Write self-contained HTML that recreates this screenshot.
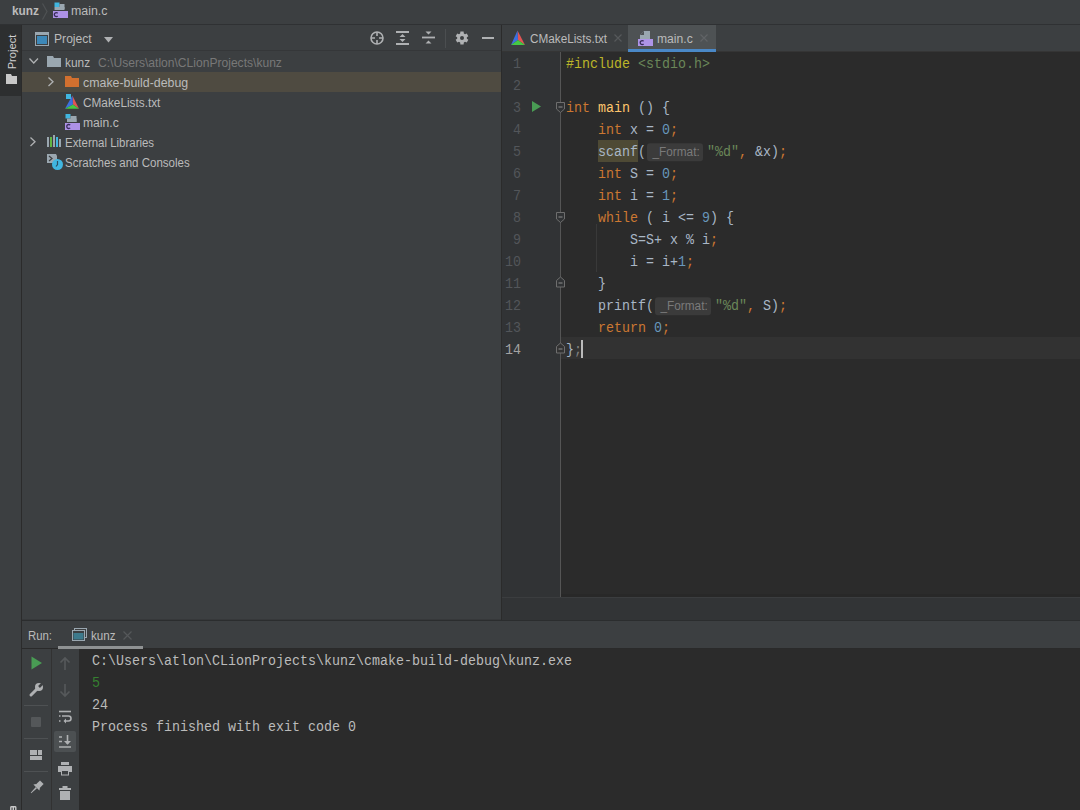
<!DOCTYPE html>
<html><head><meta charset="utf-8">
<style>
*{margin:0;padding:0;box-sizing:border-box}
html,body{width:1080px;height:810px;overflow:hidden;background:#3c3f41;font-family:"Liberation Sans",sans-serif;color:#bbbbbb}
div,span.a,svg{position:absolute}
svg{overflow:visible}
.t{font-size:12.5px;line-height:14px;white-space:nowrap;transform-origin:0 11.33px}
.m{font-family:"Liberation Mono",monospace;font-size:13.33px;line-height:22px;white-space:pre;height:22px;transform:scaleY(1.06);transform-origin:0 14.55px}
.kw{color:#cc7832}.num{color:#6897bb}.str{color:#6a8759}.pp{color:#bbb529}.fn{color:#ffc66d}.tx{color:#a9b7c6}
.ln{font-family:"Liberation Mono",monospace;font-size:13.33px;line-height:22px;color:#53565a;text-align:right;width:28px;left:0;transform:scaleY(1.05);transform-origin:0 14.55px}
.hint{display:inline-block;position:relative;width:61px;height:22px;vertical-align:top}
.hint i{position:absolute;left:1px;top:2px;width:56px;height:17px;background:#3b3b3b;border-radius:3px;font-style:normal;font-family:"Liberation Sans",sans-serif;font-size:11.8px;line-height:17px;color:#7a7a7a;padding-left:5.5px;overflow:hidden}
</style></head><body>

<!-- NAV BAR -->
<div style="left:0;top:0;width:1080px;height:24px;background:#3c3f41"></div>
<div style="left:0;top:24px;width:1080px;height:1px;background:#2f3133"></div>
<div class="t" style="left:12.3px;top:3.7px;font-weight:bold;color:#bbbbbb;transform:scaleX(0.95)">kunz</div>
<svg style="left:42px;top:3px" width="6" height="17"><path d="M0.5 0.5 L5 8.5 L0.5 16.5" stroke="#4f5254" stroke-width="1.2" fill="none"/></svg>
<svg style="left:53px;top:2px" width="16" height="16">
  <rect x="1.5" y="0.5" width="5" height="4.5" fill="#40b6e0"/>
  <rect x="6.5" y="2" width="5" height="5" fill="#9aa7b0"/>
  <rect x="1.5" y="5" width="10" height="3" fill="#9aa7b0"/>
  <rect x="0" y="9" width="15" height="7" fill="#b99bf8" opacity="0.9"/>
  <path d="M4.7 11.2 A2 2 0 1 0 4.7 14.0" stroke="#3a2d5c" stroke-width="1.3" fill="none"/>
</svg>
<div class="t" style="left:71px;top:3.7px;color:#bbbbbb;transform:scaleX(0.99)">main.c</div>

<!-- LEFT STRIPE -->
<div style="left:0;top:25px;width:21px;height:785px;background:#3c3f41"></div>
<div style="left:0;top:25px;width:21px;height:71px;background:#2d2f30"></div>
<div style="left:21px;top:25px;width:1px;height:785px;background:#2b2b2b"></div>
<div class="t" style="left:-8px;top:45px;width:40px;height:14px;transform:rotate(-90deg) scaleX(0.965);transform-origin:20px 7px;color:#d0d0d0;font-size:11.5px;text-align:center">Project</div>
<svg style="left:6px;top:74px" width="12" height="11"><path d="M0 0 H5 L6 2 H11 V10 H0 Z" fill="#c8c8c8"/></svg>

<svg style="left:10px;top:806px" width="7" height="4"><path d="M0.8 4 V1.5 Q0.8 0.8 1.5 0.8 H5 Q5.8 0.8 5.8 1.5 V4 M3.3 1 V4" stroke="#c8c8c8" stroke-width="1.4" fill="none"/></svg>
<!-- PROJECT PANEL -->
<div style="left:22px;top:25px;width:479px;height:595px;background:#3c3f41"></div>
<div style="left:22px;top:50px;width:479px;height:1px;background:#353739"></div>
<svg style="left:35px;top:32px" width="14" height="14"><rect x="0.5" y="0.5" width="13" height="13" fill="none" stroke="#9aa7b0"/><rect x="1" y="1" width="12" height="2" fill="#9aa7b0"/><rect x="2" y="4" width="10" height="8" fill="#3d88b8"/></svg>
<div class="t" style="left:53.5px;top:31.7px;color:#bbbbbb;transform:scaleX(0.97)">Project</div>
<svg style="left:103.5px;top:37px" width="10" height="6"><path d="M0 0 H9 L4.5 5.5 Z" fill="#afb1b3"/></svg>
<!-- header icons -->
<svg style="left:369px;top:31px" width="16" height="16"><circle cx="8" cy="7" r="6" fill="none" stroke="#afb1b3" stroke-width="1.6"/><path d="M8 1 V5 M8 9 V13 M2 7 H6 M10 7 H14" stroke="#afb1b3" stroke-width="1.6"/></svg>
<svg style="left:396px;top:30px" width="14" height="16"><path d="M0 2 H13 M0 14 H13" stroke="#afb1b3" stroke-width="1.8"/><path d="M3.5 7 L6.5 4 L9.5 7 Z M3.5 9 L6.5 12 L9.5 9 Z" fill="#afb1b3"/></svg>
<svg style="left:422px;top:31px" width="14" height="14"><path d="M0 6.5 H13" stroke="#afb1b3" stroke-width="1.8"/><path d="M3.5 0.5 L6.5 3.5 L9.5 0.5 Z M3.5 12.5 L6.5 9.5 L9.5 12.5 Z" fill="#afb1b3"/></svg>
<div style="left:445px;top:29px;width:1px;height:19px;background:#4b4e50"></div>
<svg style="left:455px;top:31px" width="14" height="14"><g transform="translate(7,7) rotate(90)"><path d="M4.54 -1.84 L6.40 -1.60 L6.40 1.60 L4.54 1.84 L3.86 3.02 L4.58 4.75 L1.82 6.34 L0.68 4.85 L-0.68 4.85 L-1.82 6.34 L-4.58 4.75 L-3.86 3.02 L-4.54 1.84 L-6.40 1.60 L-6.40 -1.60 L-4.54 -1.84 L-3.86 -3.02 L-4.58 -4.75 L-1.82 -6.34 L-0.68 -4.85 L0.68 -4.85 L1.82 -6.34 L4.58 -4.75 L3.86 -3.02 Z" fill="#afb1b3"/><circle r="2" fill="#3c3f41"/></g></svg>
<div style="left:482px;top:37px;width:12px;height:2px;background:#afb1b3"></div>

<!-- tree -->
<div style="left:22px;top:72px;width:479px;height:20px;background:#4f4b41"></div>
<svg style="left:29px;top:58px" width="10" height="7"><path d="M0.5 0.5 L4.75 5 L9 0.5" stroke="#afb1b3" stroke-width="1.3" fill="none"/></svg>
<svg style="left:47px;top:56px" width="15" height="12"><path d="M0 0 H6 L7 2 H14 V11 H0 Z" fill="#9aa7b0"/></svg>
<div class="t" style="left:64.6px;top:56px;color:#bbbbbb;transform:scaleX(0.95)">kunz</div>
<div class="t" style="left:97.7px;top:56px;color:#787878;transform:scaleX(0.966)">C:\Users\atlon\CLionProjects\kunz</div>

<svg style="left:48px;top:77px" width="6" height="10"><path d="M0.5 0.5 L5 4.75 L0.5 9" stroke="#afb1b3" stroke-width="1.3" fill="none"/></svg>
<svg style="left:65px;top:76px" width="15" height="12"><path d="M0 0 H6 L7 2 H14 V11 H0 Z" fill="#d2702f"/></svg>
<div class="t" style="left:83.3px;top:76px;color:#bbbbbb;transform:scaleX(0.99)">cmake-build-debug</div>

<svg style="left:64px;top:93px" width="16" height="17">
  <path d="M8.4 2.5 L15 15.7 L9 11.5 Z" fill="#e05555"/>
  <path d="M8.4 2.5 L1 15.7 L9 11.5 Z" fill="#3d6fe0"/>
  <path d="M1 15.7 L15 15.7 L9 11.5 Z" fill="#45c845"/>
  <rect x="2" y="1" width="5" height="5" fill="#40b6e0"/>
</svg>
<div class="t" style="left:82.6px;top:96px;color:#bbbbbb;transform:scaleX(0.944)">CMakeLists.txt</div>

<svg style="left:65px;top:114px" width="16" height="16">
  <rect x="0.5" y="0" width="5" height="4.5" fill="#40b6e0"/>
  <rect x="5.5" y="2" width="6" height="6" fill="#9aa7b0"/>
  <rect x="2" y="4.5" width="9.5" height="3.5" fill="#9aa7b0"/>
  <rect x="0" y="9" width="15" height="7" fill="#b99bf8" opacity="0.9"/>
  <path d="M5.2 11.1 A2 2 0 1 0 5.2 13.9" stroke="#3a2d5c" stroke-width="1.3" fill="none"/>
</svg>
<div class="t" style="left:83px;top:116px;color:#bbbbbb;transform:scaleX(0.97)">main.c</div>

<svg style="left:30px;top:137px" width="6" height="10"><path d="M0.5 0.5 L5 4.75 L0.5 9" stroke="#afb1b3" stroke-width="1.3" fill="none"/></svg>
<svg style="left:46px;top:135px" width="16" height="12">
  <rect x="1" y="2" width="2" height="10" fill="#9aa7b0"/>
  <rect x="4" y="2" width="2" height="10" fill="#62b543"/>
  <rect x="7" y="0" width="2" height="12" fill="#9aa7b0"/>
  <rect x="10" y="2" width="2" height="10" fill="#40b6e0"/>
  <rect x="13" y="4" width="2" height="8" fill="#9aa7b0"/>
</svg>
<div class="t" style="left:64.8px;top:136px;color:#bbbbbb;transform:scaleX(0.916)">External Libraries</div>

<svg style="left:47px;top:154px" width="16" height="16">
  <path d="M0 0 H9 L10 2 V9 H0 Z" fill="#9aa7b0"/>
  <path d="M2 2 L5 4.5 L2 7" stroke="#3c3f41" stroke-width="1.2" fill="none"/>
  <circle cx="10.5" cy="10.5" r="5.5" fill="#40b6e0"/>
  <path d="M10.5 7 V10.5 L9 12.5" stroke="#2b4f63" stroke-width="1.2" fill="none"/>
</svg>
<div class="t" style="left:64.6px;top:156px;color:#bbbbbb;transform:scaleX(0.92)">Scratches and Consoles</div>

<!-- vertical separator -->
<div style="left:501px;top:25px;width:1px;height:596px;background:#2b2b2b"></div>

<!-- EDITOR TABS -->
<div style="left:502px;top:25px;width:578px;height:26px;background:#3c3f41"></div>
<div style="left:628px;top:25px;width:88px;height:24px;background:#4e5254"></div>
<div style="left:628px;top:49px;width:88px;height:3px;background:#4a88c7"></div>
<div style="left:502px;top:51px;width:126px;height:1px;background:#353535"></div><div style="left:716px;top:51px;width:364px;height:1px;background:#353535"></div>
<svg style="left:510px;top:30px" width="16" height="16">
  <path d="M7.5 0.5 L15 15 L8 10 Z" fill="#e05555"/>
  <path d="M7.5 0.5 L1 15 L8 10 Z" fill="#3d6fe0"/>
  <path d="M1 15 L15 15 L8 10 Z" fill="#45c845"/>
</svg>
<div class="t" style="left:529.8px;top:32.4px;color:#bbbbbb;transform:scaleX(0.94)">CMakeLists.txt</div>
<svg style="left:614px;top:34px" width="8" height="8"><path d="M0.5 0.5 L7.5 7.5 M7.5 0.5 L0.5 7.5" stroke="#56595b" stroke-width="1.2"/></svg>
<svg style="left:638px;top:31px" width="16" height="16">
  <path d="M6 0 H12 V8 H2 V4 Z" fill="#9aa7b0"/>
  <path d="M2 4 H6 V0 Z" fill="#4e5254"/>
  <rect x="0" y="8" width="15" height="7" fill="#b99bf8" opacity="0.9"/>
  <path d="M5.6 10.2 A2 2 0 1 0 5.6 13.0" stroke="#3a2d5c" stroke-width="1.3" fill="none"/>
</svg>
<div class="t" style="left:656.5px;top:32.4px;color:#bbbbbb;transform:scaleX(0.97)">main.c</div>
<svg style="left:700px;top:34px" width="8" height="8"><path d="M0.5 0.5 L7.5 7.5 M7.5 0.5 L0.5 7.5" stroke="#606366" stroke-width="1.2"/></svg>

<!-- EDITOR -->
<div style="left:502px;top:52px;width:578px;height:545px;background:#2b2b2b"></div>
<div style="left:502px;top:52px;width:58px;height:545px;background:#313335"></div>
<div style="left:561px;top:337px;width:519px;height:22px;background:#323232"></div>
<div style="left:560px;top:52px;width:1px;height:545px;background:#555555"></div>
<div style="left:561px;top:594px;width:519px;height:3px;background:#282828"></div><div style="left:502px;top:597px;width:578px;height:1px;background:#3b3d3f"></div>
<div style="left:502px;top:598px;width:578px;height:22px;background:#323436"></div>

<!-- line numbers -->
<div id="lns" style="left:493px;top:54.45px;width:28px;height:330px">
<div class="ln" style="top:0">1</div>
<div class="ln" style="top:22px">2</div>
<div class="ln" style="top:44px">3</div>
<div class="ln" style="top:66px">4</div>
<div class="ln" style="top:88px">5</div>
<div class="ln" style="top:110px">6</div>
<div class="ln" style="top:132px">7</div>
<div class="ln" style="top:154px">8</div>
<div class="ln" style="top:176px">9</div>
<div class="ln" style="top:198px">10</div>
<div class="ln" style="top:220px">11</div>
<div class="ln" style="top:242px">12</div>
<div class="ln" style="top:264px">13</div>
<div class="ln" style="top:286px;color:#a4a3a3">14</div>
</div>
<!-- run gutter icon -->
<svg style="left:532px;top:101px" width="10" height="11"><path d="M0 0 L9 5.5 L0 11 Z" fill="#499c54"/></svg>
<!-- fold markers -->
<svg style="left:556px;top:102px" width="10" height="12"><path d="M0.5 0.5 H8.5 V7 L4.5 10.5 L0.5 7 Z" fill="#313335" stroke="#6e6e6e"/><path d="M2.5 5 H6.5" stroke="#8e8e8e"/></svg>
<svg style="left:556px;top:212px" width="10" height="12"><path d="M0.5 0.5 H8.5 V7 L4.5 10.5 L0.5 7 Z" fill="#313335" stroke="#6e6e6e"/><path d="M2.5 5 H6.5" stroke="#8e8e8e"/></svg>
<svg style="left:556px;top:276px" width="10" height="12"><path d="M0.5 11 H8.5 V4.5 L4.5 1 L0.5 4.5 Z" fill="#313335" stroke="#6e6e6e"/><path d="M2.5 7 H6.5" stroke="#8e8e8e"/></svg>
<svg style="left:556px;top:342px" width="10" height="12"><path d="M0.5 11 H8.5 V4.5 L4.5 1 L0.5 4.5 Z" fill="#323232" stroke="#6e6e6e"/><path d="M2.5 7 H6.5" stroke="#8e8e8e"/></svg>
<!-- indent guide -->
<div style="left:596px;top:224px;width:1px;height:48px;background:#393939"></div>
<!-- scanf highlight -->
<div style="left:598px;top:140px;width:40px;height:22px;background:#4e4a35"></div>

<!-- code -->
<div id="code" style="left:566px;top:54.45px;width:514px;height:330px" class="tx">
<div class="m" style="top:0;left:0"><span class="pp">#include</span> <span class="str">&lt;stdio.h&gt;</span></div>
<div class="m" style="top:44px;left:0"><span class="kw">int</span> <span class="fn">main</span> () {</div>
<div class="m" style="top:66px;left:0">    <span class="kw">int</span> x = <span class="num">0</span><span class="kw">;</span></div>
<div class="m" style="top:88px;left:0">    scanf(<span class="hint"><i>_Format:</i></span><span class="str">"%d"</span><span class="kw">,</span> &amp;x)<span class="kw">;</span></div>
<div class="m" style="top:110px;left:0">    <span class="kw">int</span> S = <span class="num">0</span><span class="kw">;</span></div>
<div class="m" style="top:132px;left:0">    <span class="kw">int</span> i = <span class="num">1</span><span class="kw">;</span></div>
<div class="m" style="top:154px;left:0">    <span class="kw">while</span> ( i &lt;= <span class="num">9</span>) {</div>
<div class="m" style="top:176px;left:0">        S=S+ x % i<span class="kw">;</span></div>
<div class="m" style="top:198px;left:0">        i = i+<span class="num">1</span><span class="kw">;</span></div>
<div class="m" style="top:220px;left:0">    }</div>
<div class="m" style="top:242px;left:0">    printf(<span class="hint"><i>_Format:</i></span><span class="str">"%d"</span><span class="kw">,</span> S)<span class="kw">;</span></div>
<div class="m" style="top:264px;left:0">    <span class="kw">return</span> <span class="num">0</span><span class="kw">;</span></div>
<div class="m" style="top:286px;left:0">}<span style="color:#808080">;</span></div>
</div>
<div style="left:581px;top:340px;width:2px;height:18px;background:#bbbbbb"></div>

<!-- RUN PANEL -->
<div style="left:22px;top:619px;width:479px;height:1px;background:#36383a"></div>
<div style="left:22px;top:620px;width:1058px;height:1px;background:#2b2d2e"></div>
<div style="left:22px;top:621px;width:1058px;height:27px;background:#3c3f41"></div>
<div style="left:22px;top:648px;width:1058px;height:1px;background:#2a2a2a"></div>
<div class="t" style="left:28px;top:628.7px;color:#bbbbbb;transform:scaleX(0.91)">Run:</div>
<svg style="left:72px;top:628px" width="15" height="13"><rect x="2.5" y="0.5" width="12" height="9" fill="none" stroke="#9aa7b0"/><rect x="0.5" y="2.5" width="12" height="10" fill="#3c3f41" stroke="#9aa7b0"/><rect x="1.5" y="5" width="10" height="6.5" fill="#3d7a8c"/></svg>
<div class="t" style="left:91.2px;top:628.7px;color:#bbbbbb;transform:scaleX(0.93)">kunz</div>
<svg style="left:123px;top:631px" width="9" height="9"><path d="M0.5 0.5 L8.5 8.5 M8.5 0.5 L0.5 8.5" stroke="#55585a" stroke-width="1.2"/></svg>
<div style="left:58px;top:646px;width:85px;height:3px;background:#8f9293"></div>

<div style="left:22px;top:649px;width:29px;height:161px;background:#3c3f41"></div>
<div style="left:51px;top:649px;width:1px;height:161px;background:#323232"></div>
<div style="left:52px;top:649px;width:27px;height:161px;background:#3c3f41"></div>
<div style="left:79px;top:649px;width:1001px;height:161px;background:#2b2b2b"></div>

<!-- col1 icons -->
<svg style="left:31px;top:656px" width="12" height="14"><path d="M0.5 0.5 L11 7 L0.5 13.5 Z" fill="#499c54"/></svg>
<svg style="left:29px;top:682px" width="15" height="15"><path d="M2 13 L8 7" stroke="#afb1b3" stroke-width="3" stroke-linecap="round"/><circle cx="10" cy="5" r="4" fill="#afb1b3"/><path d="M10 5 L14 1" stroke="#3c3f41" stroke-width="2.5"/></svg>
<div style="left:24px;top:705px;width:24px;height:1px;background:#4e5153"></div>
<div style="left:31px;top:717px;width:10px;height:10px;background:#545759;border-radius:1px"></div>
<div style="left:24px;top:738px;width:24px;height:1px;background:#4e5153"></div>
<svg style="left:30px;top:750px" width="13" height="11"><rect x="0" y="0" width="7" height="5" fill="#afb1b3"/><rect x="8" y="0" width="4" height="5" fill="#afb1b3"/><rect x="0" y="6" width="12" height="4" fill="#afb1b3"/></svg>
<div style="left:24px;top:771px;width:24px;height:1px;background:#4e5153"></div>
<svg style="left:28px;top:779px" width="17" height="17"><g transform="translate(9,8) rotate(45) scale(0.85)" fill="#afb1b3"><rect x="-3" y="-8" width="6" height="6.5"/><path d="M-3 -2 H3 L5 1 H-5 Z"/><path d="M-1 1 H1 L0.4 10 H-0.4 Z"/></g></svg>

<!-- col2 icons -->
<svg style="left:59px;top:657px" width="12" height="14"><path d="M6 1 V13 M1.5 5.5 L6 1 L10.5 5.5" stroke="#56595b" stroke-width="1.6" fill="none"/></svg>
<svg style="left:59px;top:684px" width="12" height="14"><path d="M6 0 V12 M1.5 7.5 L6 12 L10.5 7.5" stroke="#56595b" stroke-width="1.6" fill="none"/></svg>
<svg style="left:58px;top:710px" width="14" height="14"><path d="M1 1.5 H13" stroke="#afb1b3" stroke-width="1.6"/><path d="M4 6 H10.5 A2.5 2.5 0 0 1 10.5 11 H7" stroke="#afb1b3" stroke-width="1.6" fill="none"/><path d="M8 8.5 L5.5 11 L8 13.5" fill="#afb1b3"/><path d="M1 6 H2.5 M1 11 H2.5" stroke="#afb1b3" stroke-width="1.6"/></svg>
<div style="left:54px;top:731px;width:22px;height:21px;background:#4c5052;border-radius:2px"></div>
<svg style="left:58px;top:735px" width="14" height="14"><path d="M1 2 H4 M1 6.5 H4 M1 12 H13" stroke="#afb1b3" stroke-width="1.6"/><path d="M9.5 0 V9" stroke="#afb1b3" stroke-width="1.6"/><path d="M6 6 L9.5 9.8 L13 6 Z" fill="#afb1b3"/></svg>
<svg style="left:58px;top:762px" width="14" height="14"><rect x="3" y="0" width="8" height="3" fill="#afb1b3"/><rect x="0" y="4" width="14" height="6" fill="#afb1b3"/><rect x="3.5" y="8.5" width="7" height="4.5" fill="#3c3f41" stroke="#afb1b3"/></svg>
<svg style="left:59px;top:786px" width="12" height="15"><rect x="3.5" y="0" width="5" height="2" fill="#afb1b3"/><rect x="0" y="2" width="12" height="2" fill="#afb1b3"/><rect x="1" y="5" width="10" height="9" fill="#afb1b3"/></svg>

<!-- console text -->
<div class="m" style="left:92px;top:651.45px;color:#bbbbbb">C:\Users\atlon\CLionProjects\kunz\cmake-build-debug\kunz.exe</div>
<div class="m" style="left:92px;top:673.45px;color:#358030">5</div>
<div class="m" style="left:92px;top:695.45px;color:#bbbbbb">24</div>
<div class="m" style="left:92px;top:717.45px;color:#bbbbbb">Process finished with exit code 0</div>

</body></html>
